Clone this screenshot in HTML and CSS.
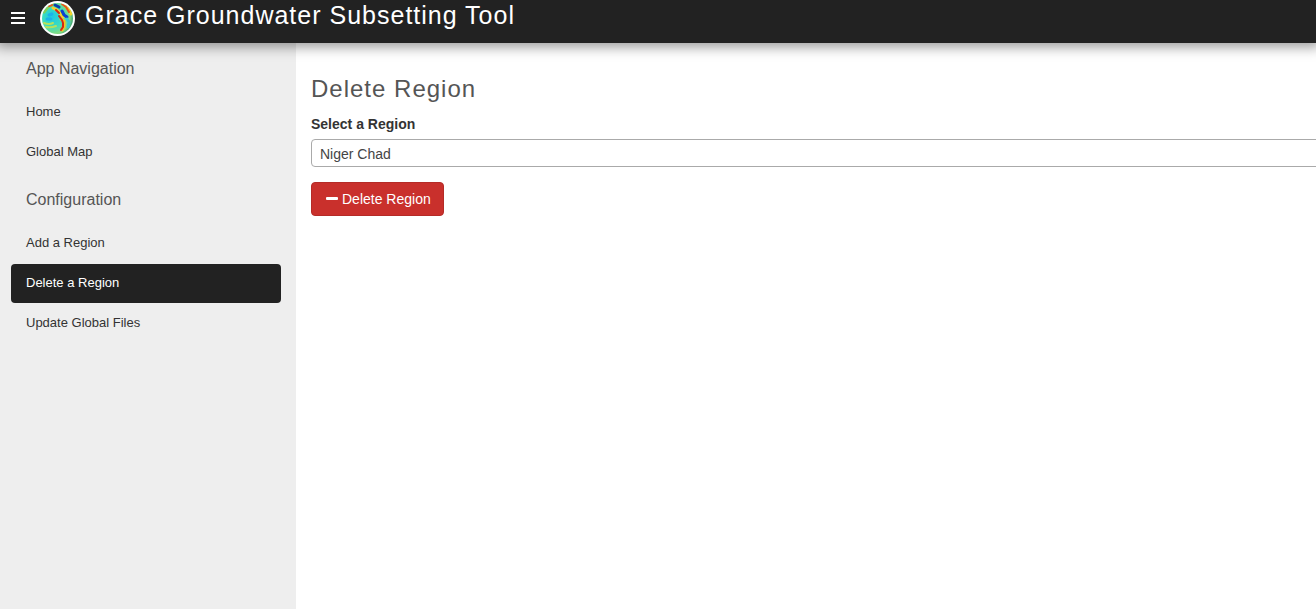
FILE: index.html
```html
<!DOCTYPE html>
<html lang="en">
<head>
<meta charset="utf-8">
<title>Grace Groundwater Subsetting Tool</title>
<link rel="stylesheet" href="styles.css">
</head>
<body>
<header class="app-header">
  <button class="menu-toggle" type="button" aria-label="Toggle navigation"><span class="bar"></span><span class="bar"></span><span class="bar"></span></button>
  <a class="app-logo" href="#" aria-label="Grace home">
    <svg viewBox="0 0 35 35" width="35" height="35" aria-hidden="true">
      <defs>
        <clipPath id="globe"><circle cx="17.5" cy="17.5" r="15.5"/></clipPath>
        <radialGradient id="ocean" cx="36%" cy="45%" r="62%">
          <stop offset="0" stop-color="#1fc8e4"/><stop offset=".45" stop-color="#3adcc0"/><stop offset=".8" stop-color="#84dc80"/><stop offset="1" stop-color="#2a8f70"/>
        </radialGradient>
        <filter id="soft" x="-20%" y="-20%" width="140%" height="140%"><feGaussianBlur stdDeviation=".6"/></filter>
      </defs>
      <circle cx="17.5" cy="17.5" r="17.5" fill="#fff"/>
      <g clip-path="url(#globe)">
        <rect width="35" height="35" fill="url(#ocean)"/>
        <g filter="url(#soft)" fill="none" stroke-linecap="round" stroke-linejoin="round">
          <path d="M4 22q5 2 9 0M6 26q5 1 10-1" stroke="#b5e25c" stroke-width="2"/>
          <path d="M9 14l3-1M7 18l4 0" stroke="#1cb2ea" stroke-width="3"/>
          <path d="M4 11l4-5 5-3" stroke="#83cf58" stroke-width="3"/>
          <path d="M13 7l4 2 3 3 3 4M25 4l4 5 2 4" stroke="#f4d52c" stroke-width="3"/>
          <path d="M9 5l3-1M22 3l4 3 3 5" stroke="#e7561a" stroke-width="2"/>
          <path d="M15 4l4 2" stroke="#0b3fa8" stroke-width="3"/>
          <path d="M22 10l2 4 3 2" stroke="#0740d0" stroke-width="3"/>
          <path d="M27 18l2 3-1 5" stroke="#37c8d2" stroke-width="3"/>
          <path d="M21 18l3 2 0 5-2 4" stroke="#ffbf1c" stroke-width="3"/>
          <path d="M16 9l3 3M19 15l3 4 1 3 0 4-2 3" stroke="#d02a14" stroke-width="2"/>
        </g>
      </g>
    </svg>
  </a>
  <span class="app-title">Grace Groundwater Subsetting Tool</span>
</header>
<div class="layout">
  <nav class="sidebar" aria-label="App Navigation">
    <h2 class="nav-title">App Navigation</h2>
    <a class="nav-link" href="#">Home</a>
    <a class="nav-link" href="#">Global Map</a>
    <h2 class="nav-title nav-title-next">Configuration</h2>
    <a class="nav-link" href="#">Add a Region</a>
    <a class="nav-link active" href="#" aria-current="page">Delete a Region</a>
    <a class="nav-link" href="#">Update Global Files</a>
  </nav>
  <main class="content">
    <h1 class="page-title">Delete Region</h1>
    <form class="region-form">
      <label class="field-label" for="region">Select a Region</label>
      <select class="region-select" id="region"><option>Niger Chad</option></select>
      <button class="delete-button" type="button"><svg width="12" height="12" viewBox="0 0 12 12" aria-hidden="true"><rect y="4" width="12" height="3" rx="1" fill="currentColor"/></svg>Delete Region</button>
    </form>
  </main>
</div>
</body>
</html>
```
FILE: styles.css
```css
* { box-sizing: border-box; }
body {
  margin: 0;
  min-height: 100vh;
  display: flex;
  flex-direction: column;
  background: #fff;
  color: #333;
  font: 14px/20px "Liberation Sans", Arial, sans-serif;
}
.app-header {
  position: relative;
  display: flex;
  align-items: flex-start;
  height: 43px;
  padding: 1px 10px;
  background: #222;
  color: #fff;
  box-shadow: 0 0 12px 4px rgba(0, 0, 0, .4);
}
.menu-toggle {
  display: flex;
  flex-direction: column;
  gap: 3px;
  width: 16px;
  margin: 11px 14px 0 0;
  padding: 0 1px;
  border: 0;
  background: none;
}
.bar { width: 14px; height: 2px; background: #fff; }
.app-logo { display: flex; margin-right: 10px; }
.app-title { font-size: 25px; line-height: 28px; letter-spacing: 1px; white-space: nowrap; }
.layout { flex: 1; display: flex; }
.sidebar {
  flex: 0 0 296px;
  padding: 16px 15px 15px 11px;
  background: #eee;
}
.nav-title { margin: 0 0 14px; padding: 0 15px; font-size: 16px; line-height: 20px; font-weight: 400; color: #555; }
.nav-title-next { margin-top: 18px; }
.nav-link {
  display: block;
  margin-bottom: 1px;
  padding: 9px 15px 10px;
  border-radius: 4px;
  color: #333;
  font-size: 13px;
  line-height: 20px;
  text-decoration: none;
}
.nav-link.active { background: #222; color: #fff; }
.content { flex: 1; min-width: 0; padding: 31px 0 0 15px; overflow: hidden; }
.page-title { margin: 0 0 10px; font-size: 24px; line-height: 30px; font-weight: 400; letter-spacing: 1px; color: #555; }
.region-form { margin-right: -15px; }
.field-label { display: block; margin-bottom: 5px; font-weight: 700; }
.region-select {
  display: block;
  width: 100%;
  height: 28px;
  margin-bottom: 15px;
  padding: 1px 8px 0;
  appearance: none;
  border: 1px solid #aaa;
  border-radius: 4px;
  background: #fff;
  color: #444;
  font: inherit;
}
.delete-button {
  display: inline-flex;
  align-items: center;
  gap: 4px;
  height: 34px;
  padding: 0 12px 0 14px;
  border: 1px solid #b52b27;
  border-radius: 4px;
  background: #c9302c;
  color: #fff;
  font: inherit;
}
```
